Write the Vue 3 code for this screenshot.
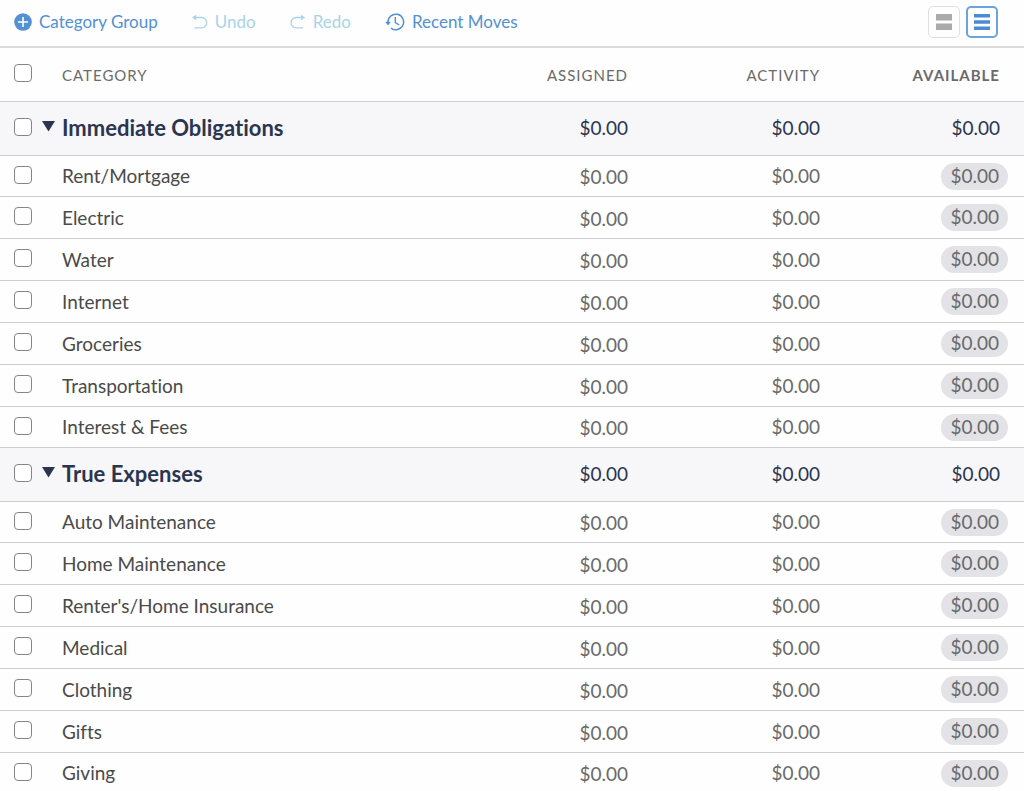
<script setup>
import { reactive, ref } from 'vue'

const makeItems = (names) => names.map((name) => ({ name, checked: false }))

const groups = reactive([
  {
    name: 'Immediate Obligations',
    open: true,
    checked: false,
    items: makeItems(['Rent/Mortgage', 'Electric', 'Water', 'Internet', 'Groceries', 'Transportation', 'Interest & Fees']),
  },
  {
    name: 'True Expenses',
    open: true,
    checked: false,
    items: makeItems(['Auto Maintenance', 'Home Maintenance', "Renter's/Home Insurance", 'Medical', 'Clothing', 'Gifts', 'Giving']),
  },
])

const allChecked = ref(false)
const view = ref('compact')
const zero = '$0.00'
</script>

<template>
  <main class="budget">
    <header class="toolbar">
      <button type="button" class="action">
        <svg width="18" height="18" viewBox="0 0 18 18" aria-hidden="true">
          <circle cx="9" cy="9" r="8.8" fill="#5390d4" />
          <path d="M9 4v10M4 9h10" stroke="#fff" stroke-width="1.6" fill="none" />
        </svg>
        <span>Category Group</span>
      </button>
      <button type="button" class="action" disabled>
        <svg width="16" height="16" viewBox="0 0 16 16" fill="none" aria-hidden="true">
          <path d="M2 3.5h7.5a5.2 5.2 0 0 1 0 10.4H2.5" stroke="currentColor" stroke-width="1.3" />
          <path d="M0 3.5 4.2.8v5.400z" fill="currentColor" />
        </svg>
        <span>Undo</span>
      </button>
      <button type="button" class="action" disabled>
        <svg width="16" height="16" viewBox="0 0 16 16" fill="none" aria-hidden="true">
          <path d="M13 3.5H6.2a5.2 5.2 0 0 0 0 10.4h6.8" stroke="currentColor" stroke-width="1.3" />
          <path d="M15.200 3.5 11 .8v5.400z" fill="currentColor" />
        </svg>
        <span>Redo</span>
      </button>
      <button type="button" class="action">
        <svg width="20" height="18" viewBox="0 0 20 18" fill="none" aria-hidden="true">
          <path d="M3 9.800V9a7.800 7.800 0 1 1 3 6.100" stroke="currentColor" stroke-width="1.5" />
          <path d="M.2 8.800h5.600L3 12.600z" fill="currentColor" />
          <path d="M10.300 4v5.500l4 2.500" stroke="currentColor" stroke-width="1.4" />
        </svg>
        <span>Recent Moves</span>
      </button>
      <div class="views">
        <button type="button" class="view" :class="{ active: view === 'expanded' }" aria-label="Expanded rows" @click="view = 'expanded'">
          <svg width="16" height="18" viewBox="0 0 16 18" aria-hidden="true">
            <path d="M0 1h16v6.500H0zM0 10.500h16V17H0z" fill="currentColor" />
          </svg>
        </button>
        <button type="button" class="view" :class="{ active: view === 'compact' }" aria-label="Compact rows" @click="view = 'compact'">
          <svg width="16" height="18" viewBox="0 0 16 18" aria-hidden="true">
            <path d="M0 1h16v3.500H0zM0 7.300h16v3.500H0zM0 13.500h16V17H0z" fill="currentColor" />
          </svg>
        </button>
      </div>
    </header>

    <table class="grid">
      <colgroup>
        <col class="col-check" />
        <col />
        <col class="col-amount" />
        <col class="col-amount" />
        <col class="col-available" />
      </colgroup>
      <thead>
        <tr>
          <th class="check"><input v-model="allChecked" type="checkbox" aria-label="Select all categories" /></th>
          <th class="name" scope="col">CATEGORY</th>
          <th class="amount" scope="col">ASSIGNED</th>
          <th class="amount" scope="col">ACTIVITY</th>
          <th class="amount available" scope="col">AVAILABLE</th>
        </tr>
      </thead>
      <tbody v-for="group in groups" :key="group.name">
        <tr class="group">
          <td class="check"><input v-model="group.checked" type="checkbox" :aria-label="group.name" /></td>
          <th class="title" scope="rowgroup">
            <button type="button" class="toggle" :aria-expanded="group.open" @click="group.open = !group.open">
              <svg width="13" height="11" viewBox="0 0 13 11" aria-hidden="true">
                <path d="M0 0h13L6.500 10.500z" fill="currentColor" />
              </svg>
              <span>{{ group.name }}</span>
            </button>
          </th>
          <td class="amount">{{ zero }}</td>
          <td class="amount">{{ zero }}</td>
          <td class="amount available">{{ zero }}</td>
        </tr>
        <template v-if="group.open">
          <tr v-for="item in group.items" :key="item.name" class="item">
            <td class="check"><input v-model="item.checked" type="checkbox" :aria-label="item.name" /></td>
            <td class="name">{{ item.name }}</td>
            <td class="amount assigned">{{ zero }}</td>
            <td class="amount">{{ zero }}</td>
            <td class="amount balance"><span class="pill">{{ zero }}</span></td>
          </tr>
        </template>
      </tbody>
    </table>
  </main>
</template>

<style>
html {
  overflow: hidden;
}
body {
  margin: 0;
  background: #fefefe;
}
</style>

<style scoped>
.budget {
  font-family: Lato, "Open Sans", sans-serif;
  font-size: 19px;
  line-height: 24px;
  font-variant-ligatures: none;
  color: #4a4a4a;
}
button {
  font: inherit;
  font-variant-ligatures: inherit;
  color: inherit;
  background: none;
  border: 0;
  padding: 0;
  cursor: pointer;
}
svg {
  display: block;
  flex: none;
}
.toolbar {
  display: flex;
  align-items: center;
  gap: 34px;
  box-sizing: border-box;
  height: 48px;
  padding: 0 26px 2px 14px;
  border-bottom: 2px solid #dcdcdc;
}
.action {
  display: flex;
  align-items: center;
  gap: 7px;
  font-size: 17px;
  color: #5390d4;
  white-space: nowrap;
}
.action:disabled {
  color: #a9d3e8;
  cursor: default;
}
.views {
  display: flex;
  gap: 6px;
  margin-left: auto;
}
.view {
  display: flex;
  align-items: center;
  justify-content: center;
  box-sizing: border-box;
  width: 32px;
  height: 32px;
  border: 1px solid #dfdfe3;
  border-radius: 5px;
  color: #aaaaab;
}
.view.active {
  border: 2px solid #6ba3dc;
  color: #4b8bd3;
}
.grid {
  width: 100%;
  table-layout: fixed;
  border-collapse: separate;
  border-spacing: 0;
}
.col-check {
  width: 42px;
}
.col-amount {
  width: 192px;
}
.col-available {
  width: 204px;
}
th,
td {
  box-sizing: border-box;
  padding: 0;
  text-align: left;
  vertical-align: middle;
  font-weight: 400;
  border-bottom: 1px solid #cdcdcf;
  white-space: nowrap;
}
thead th {
  height: 54px;
  font-size: 15px;
  letter-spacing: 1px;
  color: #6b6b6b;
}
thead th.available {
  font-weight: 700;
}
.check {
  padding: 0 0 3px 14px;
}
.check input {
  display: block;
  appearance: none;
  box-sizing: border-box;
  width: 18px;
  height: 18px;
  margin: 0;
  border: 1px solid #858585;
  border-radius: 4px;
  background: #fff;
}
.check input:checked {
  background: #5390d4;
}
.name {
  padding-left: 20px;
}
.amount {
  text-align: right;
  color: #6a6a6a;
}
.available {
  padding-right: 24px;
}
.group td,
.group th {
  height: 54px;
  padding-bottom: 2px;
  background: #f7f7fa;
  color: #2b3550;
}
.group .check {
  padding-bottom: 4px;
}
.title {
  font-size: 22px;
}
.toggle {
  display: flex;
  align-items: center;
  gap: 7px;
  font-weight: 700;
}
.toggle svg {
  margin-bottom: 3px;
}
.item td {
  height: 42px;
}
.group + .item td,
.item:last-child td {
  height: 41px;
}
.item .assigned {
  padding-top: 2px;
}
.balance {
  padding-right: 16px;
}
.pill {
  display: inline-block;
  vertical-align: middle;
  padding: 1px 9px 2px;
  border-radius: 14px;
  background: #e3e3e7;
}
</style>
